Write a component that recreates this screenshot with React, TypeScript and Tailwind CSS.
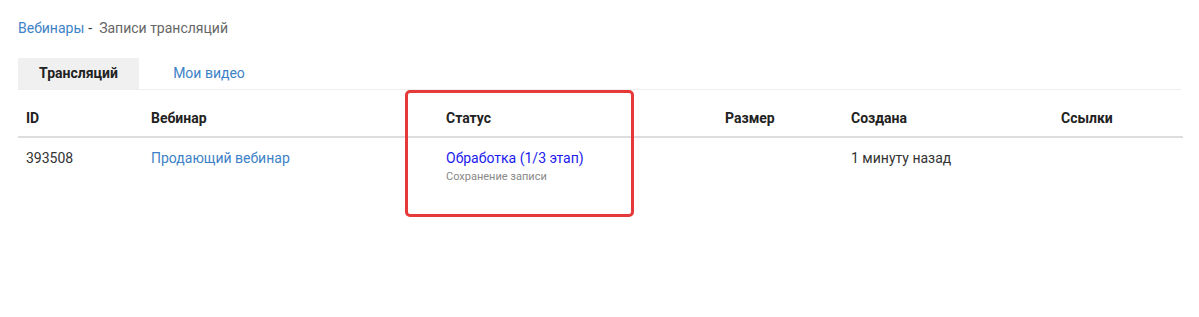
import React from 'react';

const App: React.FC = () => {
  return (
    <div className="relative min-h-[317px] bg-white px-[18px] pt-[18px] text-[14px] text-[#333] font-['Roboto',sans-serif]">
      <div className="flex items-center leading-[20px]">
        <a className="text-[#3d82c6]">Вебинары</a>
        <span className="ml-[4px] text-[#333]">-</span>
        <span className="ml-[7px] text-[#666]">Записи трансляций</span>
      </div>

      <div className="mt-[20px] flex border-b border-[#eeeeee]">
        <div className="flex h-[31px] w-[121px] items-center justify-center bg-[#f0f0f0] font-bold text-[#222]">
          Трансляций
        </div>
        <div className="flex h-[31px] w-[140px] items-center justify-center text-[#3d82c6]">
          Мои видео
        </div>
      </div>

      <table className="w-[1165px] table-fixed border-collapse">
        <colgroup>
          <col className="w-[125px]" />
          <col className="w-[295px]" />
          <col className="w-[279px]" />
          <col className="w-[126px]" />
          <col className="w-[210px]" />
          <col className="w-[130px]" />
        </colgroup>
        <thead>
          <tr className="border-b-2 border-[#dddddd]">
            <th className="h-[47px] px-2 pt-[10px] text-left font-bold text-[#222]">ID</th>
            <th className="px-2 pt-[10px] text-left font-bold text-[#222]">Вебинар</th>
            <th className="px-2 pt-[10px] text-left font-bold text-[#222]">Статус</th>
            <th className="px-2 pt-[10px] text-left font-bold text-[#222]">Размер</th>
            <th className="px-2 pt-[10px] text-left font-bold text-[#222]">Создана</th>
            <th className="px-2 pt-[10px] text-left font-bold text-[#222]">Ссылки</th>
          </tr>
        </thead>
        <tbody>
          <tr className="align-top">
            <td className="px-2 pt-[10px] text-[#333]">393508</td>
            <td className="px-2 pt-[10px]">
              <a className="text-[#3d82c6]">Продающий вебинар</a>
            </td>
            <td className="px-2 pt-[10px]">
              <div className="text-[#1a1aee]">Обработка (1/3 этап)</div>
              <div className="text-[11px] leading-[16px] text-[#888]">Сохранение записи</div>
            </td>
            <td className="px-2 pt-[10px]"></td>
            <td className="px-2 pt-[10px] text-[#333]">1 минуту назад</td>
            <td className="px-2 pt-[10px]"></td>
          </tr>
        </tbody>
      </table>

      <div className="absolute left-[405px] top-[90px] h-[127px] w-[229px] rounded-[5px] border-[3px] border-[#e5393a]" />
    </div>
  );
};

export default App;
